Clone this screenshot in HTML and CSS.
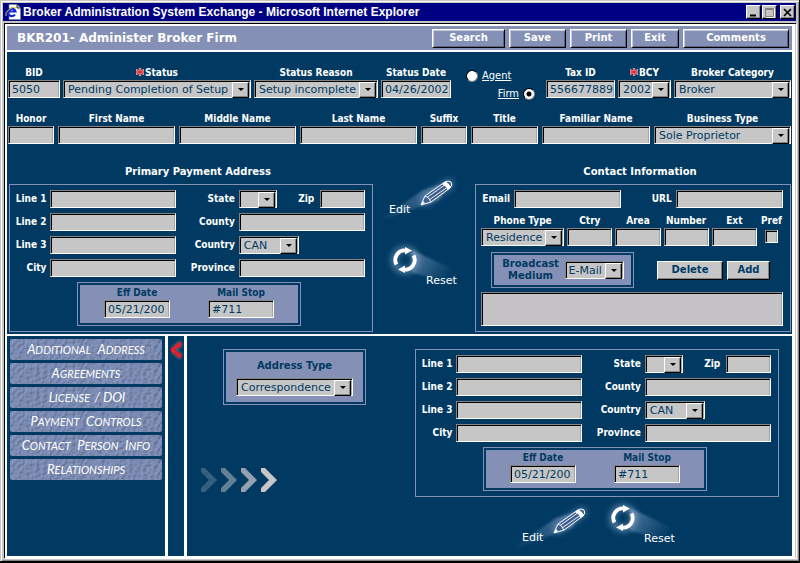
FILE: index.html
```html
<!DOCTYPE html>
<html lang="en">
<head>
<meta charset="utf-8">
<title>Broker Administration System Exchange - Microsoft Internet Explorer</title>
<link rel="stylesheet" href="styles.css">
</head>
<body>
<svg class="defs" aria-hidden="true">
  <defs>
    <filter id="stone" x="0" y="0" width="100%" height="100%">
      <feTurbulence type="fractalNoise" baseFrequency="0.28" numOctaves="3" seed="4" result="n"/>
      <feDiffuseLighting in="n" surfaceScale="1.5" diffuseConstant="1.1" lighting-color="#8090b8">
        <feDistantLight azimuth="225" elevation="58"/>
      </feDiffuseLighting>
      <feComposite in2="SourceAlpha" operator="in"/>
    </filter>
    <filter id="glow" x="-50%" y="-50%" width="200%" height="200%"><feGaussianBlur stdDeviation="3"/></filter>
    <filter id="soft" x="-20%" y="-20%" width="140%" height="140%"><feGaussianBlur stdDeviation="1"/></filter>
    <linearGradient id="beamEdit" x1="1" y1="0" x2="0" y2="1">
      <stop offset="0" stop-color="#8ba6cc" stop-opacity=".6"/><stop offset="1" stop-color="#8ba6cc" stop-opacity="0"/>
    </linearGradient>
    <linearGradient id="beamReset" x1="0" y1="0" x2="1" y2=".6">
      <stop offset="0" stop-color="#8ba6cc" stop-opacity=".6"/><stop offset="1" stop-color="#8ba6cc" stop-opacity="0"/>
    </linearGradient>
    <symbol id="pencil" viewBox="0 0 80 46" overflow="visible">
      <path d="M-6 46 40 14 66 6 56 24Z" fill="url(#beamEdit)" filter="url(#soft)"/>
      <path d="M42 25 66 8" stroke="#a9c0de" stroke-width="9" stroke-linecap="round" opacity=".5" filter="url(#glow)"/>
      <path d="M38 29 42 20 62 6Q65 4 68 6 70 9 67 12L48 26Z" fill="#3d6090" stroke="#fff" stroke-width="1"/>
      <path d="M44 21.500 61 9.500M46 24 64 11.500M42 20Q46 21 48 26" stroke="#fff" stroke-width=".9" fill="none"/>
      <path d="M59 8Q63 10 64.500 14L68 11.500Q66 7 62 5.500Z" fill="#fff"/>
      <path d="M38 29 40 25 42 27Z" fill="#fff"/>
    </symbol>
    <symbol id="cycle" viewBox="0 0 80 50" overflow="visible">
      <path d="M24 8 66 28Q70 34 64 40L24 31Z" fill="url(#beamReset)" filter="url(#soft)"/>
      <circle cx="17" cy="18" r="11" fill="none" stroke="#a9c0de" stroke-width="5" opacity=".6" filter="url(#glow)"/>
      <path d="M8.500 22.500A9.500 9.500 0 0 1 18 8.500M25.500 13.500A9.500 9.500 0 0 1 16 27.500" fill="none" stroke="#fff" stroke-width="3.800"/>
      <path d="M17 5 24 8.500 17 12.500ZM17 23.500 10 27.500 17 31Z" fill="#fff"/>
    </symbol>
    <symbol id="star" viewBox="0 0 8 8">
      <path d="M4 0V8M0 2 8 6M8 2 0 6" stroke="#f4c6cc" stroke-width="2.200"/>
      <path d="M4 .5V7.500M.8 2.400 7.200 5.600M7.200 2.400 .8 5.600" stroke="#e8262c" stroke-width="1.200"/>
    </symbol>
  </defs>
</svg>

<div class="window">
  <header class="titlebar">
    <svg class="appicon" width="17" height="16" viewBox="0 0 17 16" aria-hidden="true">
      <path d="M4 .5H12L15.500 4V15.500H4Z" fill="#fff" stroke="#848484" stroke-width=".6"/>
      <path d="M12 .5V4H15.500" fill="#c6c6c6" stroke="#000" stroke-width=".8"/>
      <path d="M10 10.500A3.700 3.700 0 1 1 10.500 7.500H4" fill="none" stroke="#1423e0" stroke-width="2.200"/>
      <path d="M1 12Q-.5 9 4 5.500 8.500 2 11 4" fill="none" stroke="#d8cf3a" stroke-width="1"/>
    </svg>
    <h1>Broker Administration System Exchange - Microsoft Internet Explorer</h1>
    <div class="winbuttons">
      <button type="button" aria-label="Minimize"><svg width="13" height="11"><path d="M3 8.500H9" stroke="#000" stroke-width="2"/></svg></button>
      <button type="button" aria-label="Maximize"><svg width="13" height="11"><path d="M2.500 1.500H10.500V9.500H2.500ZM2.500 2.500H10.500" stroke="#848484" fill="none"/><path d="M11.500 2V10.500H3" stroke="#fff" fill="none"/></svg></button>
      <button type="button" aria-label="Close"><svg width="13" height="11"><path d="M3 2 10 9M10 2 3 9" stroke="#000" stroke-width="1.700"/></svg></button>
    </div>
  </header>

  <div class="page">
    <div class="toolbar">
      <h2>BKR201- Administer Broker Firm</h2>
      <button type="button" class="tool w-search">Search</button>
      <button type="button" class="tool w-save">Save</button>
      <button type="button" class="tool w-save">Print</button>
      <button type="button" class="tool w-exit">Exit</button>
      <button type="button" class="tool w-comments">Comments</button>
    </div>

    <form class="firm">
      <div class="row row-status">
        <div class="field"><label for="bid">BID</label><input id="bid" value="5050"></div>
        <div class="field"><label for="status"><svg class="star"><use href="#star"/></svg>Status</label><span class="select"><select id="status"><option>Pending Completion of Setup</option></select></span></div>
        <div class="field"><label for="reason">Status Reason</label><span class="select"><select id="reason"><option>Setup incomplete</option></select></span></div>
        <div class="field"><label for="sdate">Status Date</label><input id="sdate" value="04/26/2002"></div>
        <div class="kind">
          <label><input type="radio" name="kind"><span>Agent</span></label>
          <label class="end"><span>Firm</span><input type="radio" name="kind" checked></label>
        </div>
        <div class="field"><label for="tax">Tax ID</label><input id="tax" value="556677889"></div>
        <div class="field"><label for="bcy"><svg class="star"><use href="#star"/></svg>BCY</label><span class="select"><select id="bcy"><option>2002</option></select></span></div>
        <div class="field"><label for="cat">Broker Category</label><span class="select"><select id="cat"><option>Broker</option></select></span></div>
      </div>

      <div class="row row-name">
        <div class="field"><label for="honor">Honor</label><input id="honor"></div>
        <div class="field"><label for="first">First Name</label><input id="first"></div>
        <div class="field"><label for="middle">Middle Name</label><input id="middle"></div>
        <div class="field"><label for="last">Last Name</label><input id="last"></div>
        <div class="field"><label for="suffix">Suffix</label><input id="suffix"></div>
        <div class="field"><label for="ttl">Title</label><input id="ttl"></div>
        <div class="field"><label for="familiar">Familiar Name</label><input id="familiar"></div>
        <div class="field"><label for="biz">Business Type</label><span class="select"><select id="biz"><option>Sole Proprietor</option></select></span></div>
      </div>

      <div class="sections">
        <section>
          <h3>Primary Payment Address</h3>
          <div class="panel address">
            <label for="p1">Line 1</label><input id="p1">
            <label for="pst">State</label>
            <div class="statezip"><span class="select"><select id="pst"><option></option></select></span><label for="pzip">Zip</label><input id="pzip"></div>
            <label for="p2">Line 2</label><input id="p2">
            <label for="pcty">County</label><input id="pcty">
            <label for="p3">Line 3</label><input id="p3">
            <label for="pctr">Country</label><span class="select country"><select id="pctr"><option>CAN</option></select></span>
            <label for="pcity">City</label><input id="pcity">
            <label for="pprov">Province</label><input id="pprov">
            <div class="inset dates">
              <div class="field"><label for="peff">Eff Date</label><input id="peff" value="05/21/200"></div>
              <div class="field"><label for="pmail">Mail Stop</label><input id="pmail" value="#711"></div>
            </div>
          </div>
        </section>

        <div class="actions stacked">
          <button type="button" class="action edit"><svg><use href="#pencil"/></svg><span>Edit</span></button>
          <button type="button" class="action reset"><svg><use href="#cycle"/></svg><span>Reset</span></button>
        </div>

        <section>
          <h3>Contact Information</h3>
          <div class="panel contact">
            <div class="online">
              <label for="email">Email</label><input id="email">
              <label for="url">URL</label><input id="url">
            </div>
            <div class="phone">
              <div class="field"><label for="ptype">Phone Type</label><span class="select"><select id="ptype"><option>Residence</option></select></span></div>
              <div class="field"><label for="ctry">Ctry</label><input id="ctry"></div>
              <div class="field"><label for="area">Area</label><input id="area"></div>
              <div class="field"><label for="num">Number</label><input id="num"></div>
              <div class="field"><label for="ext">Ext</label><input id="ext"></div>
              <div class="field"><label for="pref">Pref</label><input type="checkbox" id="pref"></div>
            </div>
            <div class="broadcast">
              <div class="inset medium">
                <label for="medium">Broadcast Medium</label>
                <span class="select"><select id="medium"><option>E-Mail</option></select></span>
              </div>
              <button type="button" class="grey w-delete">Delete</button>
              <button type="button" class="grey w-add">Add</button>
            </div>
            <textarea aria-label="Contact list"></textarea>
          </div>
        </section>
      </div>
    </form>

    <div class="lower">
      <nav class="side">
        <button type="button"><span>Additional</span> <span>Address</span></button>
        <button type="button"><span>Agreements</span></button>
        <button type="button"><span>License</span> <b>/ DOI</b></button>
        <button type="button"><span>Payment</span> <span>Controls</span></button>
        <button type="button"><span>Contact</span> <span>Person</span> <span>Info</span></button>
        <button type="button"><span>Relationships</span></button>
      </nav>
      <div class="strip">
        <button type="button" aria-label="Collapse menu">
          <svg width="16" height="22" viewBox="0 0 16 22">
            <path d="M13 4 5 11 13 18" fill="none" stroke="#9fc0d8" stroke-width="5" opacity=".6" filter="url(#soft)"/>
            <path d="M13.500 3V7L7 11 13.500 15V19H11.500L2.500 12V10L11.500 3Z" fill="#e0242c" stroke="#8d1a24" stroke-width=".6"/>
          </svg>
        </button>
      </div>
      <form class="detail">
        <div class="typecol">
          <div class="inset type">
            <label for="atype">Address Type</label>
            <span class="select"><select id="atype"><option>Correspondence</option></select></span>
          </div>
          <svg class="chevrons" width="78" height="24" viewBox="0 0 78 24" aria-hidden="true">
            <g fill="#c6c6c6">
              <path d="M0 0H4L16 12 4 24H0V20L8 12 0 4Z" opacity=".27"/>
              <path d="M20 0H24L36 12 24 24H20V20L28 12 20 4Z" opacity=".5"/>
              <path d="M40 0H44L56 12 44 24H40V20L48 12 40 4Z" opacity=".75"/>
              <path d="M60 0H64L76 12 64 24H60V20L68 12 60 4Z"/>
            </g>
          </svg>
        </div>
        <div class="addrcol">
          <div class="panel address">
            <label for="a1">Line 1</label><input id="a1">
            <label for="ast">State</label>
            <div class="statezip"><span class="select"><select id="ast"><option></option></select></span><label for="azip">Zip</label><input id="azip"></div>
            <label for="a2">Line 2</label><input id="a2">
            <label for="acty">County</label><input id="acty">
            <label for="a3">Line 3</label><input id="a3">
            <label for="actr">Country</label><span class="select country"><select id="actr"><option>CAN</option></select></span>
            <label for="acity">City</label><input id="acity">
            <label for="aprov">Province</label><input id="aprov">
            <div class="inset dates">
              <div class="field"><label for="aeff">Eff Date</label><input id="aeff" value="05/21/200"></div>
              <div class="field"><label for="amail">Mail Stop</label><input id="amail" value="#711"></div>
            </div>
          </div>
          <div class="actions">
            <button type="button" class="action edit"><svg><use href="#pencil"/></svg><span>Edit</span></button>
            <button type="button" class="action reset"><svg><use href="#cycle"/></svg><span>Reset</span></button>
          </div>
        </div>
      </form>
    </div>
  </div>
</div>
</body>
</html>
```
FILE: styles.css
```css
:root {
  --navy: #003a63;
  --slate: #8490b5;
  --grey: #c6c6c6;
  --wide: "DejaVu Sans", Verdana, sans-serif;
  --tight: "DejaVu Sans Condensed", "DejaVu Sans", Tahoma, sans-serif;
}

* { box-sizing: border-box; }

body { margin: 0; background: #000; font: 10px/14px var(--wide); color: #fff; }

h1, h2, h3 { margin: 0; font-size: inherit; }

button, input, select, textarea { margin: 0; font: inherit; border-radius: 0; }

.defs { position: absolute; width: 0; height: 0; }

/* window frame */
.window {
  min-height: 100vh;
  display: flex;
  flex-direction: column;
  padding: 3px;
  background: var(--grey);
  border-right: 1px solid #000;
  border-bottom: 2px solid #000;
  box-shadow: inset 1px 1px var(--grey), inset 2px 2px #fff, inset -1px -1px #848484;
}

.titlebar {
  display: flex;
  align-items: center;
  height: 18px;
  padding: 0 1px 0 2px;
  background: #000084;
}

.titlebar h1 {
  flex: 1;
  margin-left: 1px;
  font: bold 12px/18px "Liberation Sans", Arial, sans-serif;
  white-space: nowrap;
}

.winbuttons { display: flex; gap: 1px; }

.winbuttons button {
  width: 15px;
  height: 14px;
  padding: 0;
  line-height: 0;
  background: var(--grey);
  border: 1px solid;
  border-color: #fff #000 #000 #fff;
  box-shadow: inset -1px -1px #848484;
}

.winbuttons button:last-child { margin-left: 2px; }

.page {
  flex: 1;
  display: flex;
  flex-direction: column;
  margin: 2px 0 0 1px;
  border: 1px solid #000;
  border-width: 1px 0 0 1px;
  background: #fff;
  padding: 2px 4px 2px 2px;
  box-shadow: inset -1px 0 var(--grey), 1px 1px #fff;
}

/* toolbar */
.toolbar {
  display: flex;
  align-items: center;
  gap: 4px;
  height: 24px;
  padding: 0 3px 0 10px;
  margin-bottom: 2px;
  background: var(--slate);
}

.toolbar h2 { flex: 1; font: bold 12px/14px var(--wide); }

.tool, .grey {
  height: 19px;
  padding: 0;
  font: bold 10px/14px var(--wide);
  border: 1px solid;
  border-color: #fff #000 #000 #fff;
}

.tool { background: var(--slate); color: #fff; box-shadow: inset 1px 1px #c6cbdc, inset -1px -1px #5b6485; }
.grey { background: var(--grey); color: var(--navy); box-shadow: inset -1px -1px #848484; }

.w-search { width: 73px; }
.w-save { width: 57px; }
.w-exit { width: 48px; }
.w-comments { width: 106px; }
.w-delete { width: 66px; }
.w-add { width: 43px; }

/* controls */
label { font: bold 10px/14px var(--tight); white-space: nowrap; }

input, select, textarea {
  display: block;
  width: 100%;
  min-width: 0;
  height: 18px;
  padding: 0 0 0 3px;
  background: var(--grey);
  color: var(--navy);
  border: 1px solid;
  border-color: #848484 #fff #fff #848484;
  box-shadow: inset 1px 1px #000, inset -1px 0 #a5a5a5;
  font-size: 11px;
}

select { appearance: none; padding: 1px 16px 0 4px; }

.select { position: relative; display: block; min-width: 0; }

.select::before {
  content: "";
  position: absolute;
  right: 2px;
  top: 2px;
  width: 15px;
  height: 14px;
  background: var(--grey);
  border: 1px solid;
  border-color: #fff #000 #000 #fff;
  box-shadow: inset -1px -1px #848484;
  pointer-events: none;
}

.select::after {
  content: "";
  position: absolute;
  right: 7px;
  top: 8px;
  border: solid transparent;
  border-width: 3px 3px 0;
  border-top-color: #000;
  pointer-events: none;
}

.field { display: flex; flex-direction: column; min-width: 0; }
.field label { text-align: center; }

.star { width: 8px; height: 8px; margin-right: 1px; }

/* firm form */
.firm { background: var(--navy); padding: 14px 1px 2px; }

.row { display: grid; grid-template-rows: 32px; margin-bottom: 14px; }

.row-status {
  gap: 3px;
  grid-template-columns: 52fr 188fr 124fr 70fr 89fr 69fr 53fr 117fr;
}

.row-name {
  gap: 4px;
  grid-template-columns: 46fr 117fr 117fr 117fr 46fr 67fr 108fr 137fr;
}

.kind { display: flex; flex-direction: column; gap: 4px; padding: 3px 8px 0 12px; }
.kind label { display: flex; align-items: center; gap: 4px; font: 11px/14px var(--tight); text-decoration: underline; }
.kind .end { justify-content: flex-end; }

.kind input {
  appearance: none;
  width: 12px;
  height: 12px;
  padding: 0;
  border: 1px solid;
  border-color: #000 #848484 #848484 #000;
  border-radius: 50%;
  background: #fff;
  box-shadow: none;
}

.kind input:checked { background: radial-gradient(#000 2px, #fff 3px); }

.sections {
  display: grid;
  grid-template-columns: 364fr 102fr 316fr;
  padding: 7px 0 0 1px;
}

h3 { margin-bottom: 5px; font: bold 10px/14px var(--wide); text-align: center; padding-left: 14px; }

.panel { height: 148px; border: 1px solid var(--slate); }

.address {
  display: grid;
  grid-template-columns: 37fr 127fr 56fr 128fr;
  grid-template-rows: repeat(4, 18px) 44px;
  gap: 5px 4px;
  align-items: center;
  padding: 5px 7px 0 0;
}

.address > label { text-align: right; }

.statezip { display: grid; grid-template-columns: 38fr 38fr 45fr; gap: 3px; align-items: center; }
.statezip label { text-align: right; padding-right: 3px; }
.country { width: 48%; }

.inset {
  background: var(--slate);
  color: var(--navy);
  border: 2px solid var(--navy);
  outline: 1px solid var(--slate);
}

.dates {
  grid-column: 1 / -1;
  display: flex;
  justify-content: center;
  gap: 38px;
  width: 222px;
  height: 42px;
  margin-left: 68px;
  padding-top: 1px;
}

.dates .field { width: 66px; }

/* contact panel */
.contact { padding: 5px 7px 0 5px; }

.online { display: grid; grid-template-columns: 29fr 107fr 46fr 107fr; gap: 4px; align-items: center; }
.online label { text-align: right; }

.phone { display: grid; grid-template-columns: 83fr 45fr 45fr 45fr 45fr 23fr; gap: 3px; margin-top: 6px; }

.phone input[type="checkbox"] {
  appearance: none;
  width: 13px;
  height: 13px;
  padding: 0;
  margin: 2px auto 0;
}

.broadcast { display: flex; align-items: center; margin-top: 7px; padding-left: 11px; }

.medium { display: flex; align-items: center; justify-content: center; gap: 5px; width: 141px; height: 34px; }
.medium label { width: 58px; font: bold 10px/12px var(--wide); white-space: normal; text-align: center; }
.medium .select { width: 59px; }
.medium select { padding-left: 3px; }
.w-delete { margin: 0 4px 0 24px; }

textarea { height: 34px; margin-top: 5px; resize: none; background: #c6c3c6; }

/* picture buttons */
.action {
  display: grid;
  width: 80px;
  height: 46px;
  padding: 0;
  background: none;
  border: 0;
  color: #fff;
  font: 11px/14px var(--wide);
  text-align: left;
}

.action > * { grid-area: 1 / 1; }
.action svg { width: 80px; height: 46px; overflow: visible; }
.action span { align-self: end; z-index: 1; }
.edit span { padding: 0 0 5px 6px; }
.reset { height: 50px; }
.reset svg { height: 50px; }
.reset span { padding: 0 0 4px 38px; }

.stacked { display: flex; flex-direction: column; gap: 20px; padding: 11px 0 0 10px; }
.stacked .reset { margin-left: 5px; }

/* lower pane */
.lower {
  flex: 1;
  display: grid;
  grid-template-columns: 158px 16px 1fr;
  gap: 3px;
  margin-top: 2px;
}

.side, .strip, .detail { background: var(--navy); }

.side { display: flex; flex-direction: column; gap: 3px; padding: 3px; }

.side button {
  position: relative;
  z-index: 0;
  height: 21px;
  padding: 0;
  border: 0;
  background: none;
  color: #fff;
  font: italic 11px/21px Lato, "Open Sans", sans-serif;
  text-transform: uppercase;
}

.side button::before {
  content: "";
  position: absolute;
  inset: 0;
  z-index: -1;
  border-radius: 2px;
  background: var(--slate);
  filter: url(#stone);
}

.side span { display: inline-block; margin: 0 2px; }
.side span::first-letter { font-size: 13px; }
.side b { font-size: 13px; font-weight: normal; }

.strip button { padding: 0; border: 0; background: none; line-height: 0; margin-top: 3px; }

.detail {
  display: grid;
  grid-template-columns: 228fr 364fr;
  padding: 13px 13px 0 0;
}

.typecol { padding-left: 37px; }

.type { display: flex; flex-direction: column; gap: 5px; width: 141px; height: 54px; margin-top: 1px; padding: 7px 10px; }
.type label { font: bold 10px/14px var(--wide); text-align: center; }

.chevrons { display: block; margin: 64px 0 0 -23px; }

.addrcol .actions { display: flex; align-items: flex-end; gap: 10px; padding: 3px 0 0 101px; }
```
